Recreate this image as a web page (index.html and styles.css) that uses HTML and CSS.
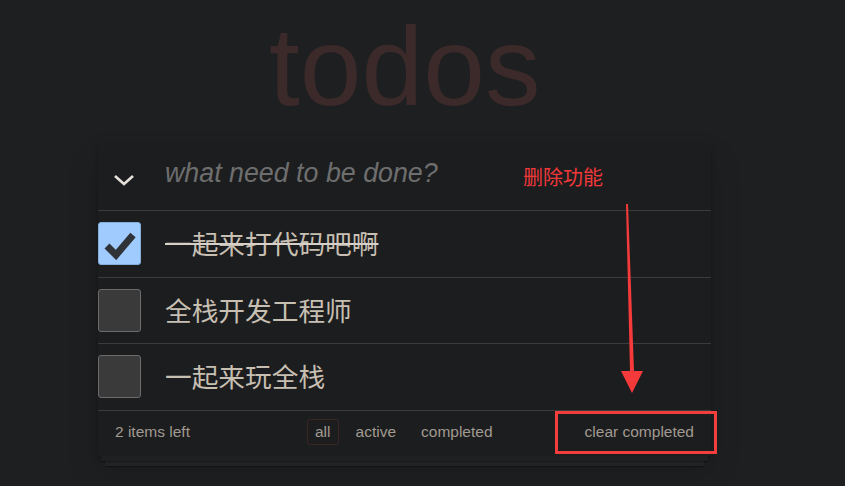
FILE: index.html
```html
<!DOCTYPE html>
<html lang="zh">
<head>
<meta charset="utf-8">
<title>todos</title>
<link rel="stylesheet" href="styles.css">
</head>
<body>
<div class="page">
  <h1 class="title">todos</h1>
  <section class="app">
    <header class="new-row">
      <span class="toggle-all">
        <svg width="22" height="12" viewBox="0 0 22 12"><polyline points="2,2 11,10 20,2" fill="none" stroke="#e6e1da" stroke-width="2.6"/></svg>
      </span>
      <span class="placeholder">what need to be done?</span>
    </header>
    <ul class="list">
      <li class="item done">
        <span class="box checked">
          <svg width="34" height="30" viewBox="0 0 34 30"><polyline points="4,16 13,25 30,5" fill="none" stroke="#2f3236" stroke-width="7"/></svg>
        </span>
        <span class="label">一起来打代码吧啊</span>
      </li>
      <li class="item">
        <span class="box"></span>
        <span class="label">全栈开发工程师</span>
      </li>
      <li class="item">
        <span class="box"></span>
        <span class="label">一起来玩全栈</span>
      </li>
    </ul>
    <footer class="footer">
      <span class="count">2 items left</span>
      <nav class="filters">
        <span class="filter selected">all</span>
        <span class="filter">active</span>
        <span class="filter">completed</span>
      </nav>
      <span class="clear">clear completed</span>
    </footer>
    <div class="sheet sheet1"></div>
    <div class="sheet sheet2"></div>
  </section>
  <div class="note">删除功能</div>
  <svg class="arrow" width="30" height="200" viewBox="0 0 30 200">
    <polygon points="5,0 7,0 13,167 22,167 11,189 0,167 9,167" fill="#f43a3a"/>
  </svg>
  <div class="highlight"></div>
</div>
</body>
</html>
```

FILE: styles.css
```css
html, body {
  margin: 0;
  padding: 0;
  background: #1e1f21;
}

.page {
  position: relative;
  width: 845px;
  height: 486px;
  overflow: hidden;
  font-family: "Liberation Sans", Arial, "Noto Sans CJK SC", sans-serif;
}

.title {
  margin: 0;
  padding-top: 4px;
  padding-left: 269px;
  font-size: 111px;
  font-weight: normal;
  line-height: 126px;
  color: #3b2a29;
  height: 141px;
}

.app {
  position: relative;
  margin-left: 98px;
  width: 613px;
  background: #1c1d1f;
  box-shadow: 0 2px 4px rgba(0,0,0,0.25), 0 15px 30px rgba(0,0,0,0.15);
}

.new-row {
  display: flex;
  align-items: center;
  height: 65px;
  border-bottom: 1px solid #3a3b3d;
}

.toggle-all {
  width: 51px;
  display: flex;
  justify-content: center;
  margin-top: 4px;
}

.placeholder {
  margin-left: 16px;
  font-size: 26.8px;
  font-style: italic;
  color: #6e6e6e;
  margin-top: -8px;
}

.list {
  list-style: none;
  margin: 0;
  padding: 0;
}

.item {
  display: flex;
  align-items: center;
  height: 65.6px;
  border-bottom: 1px solid #3a3b3d;
}

.box {
  box-sizing: border-box;
  width: 43px;
  height: 43px;
  border: 1px solid #6b6b6b;
  border-radius: 3px;
  background: #3a3a3a;
  display: flex;
  align-items: center;
  justify-content: center;
}

.box.checked {
  background: #9fcbff;
  border-color: #86aedc;
}

.box.checked svg {
  margin-top: 2px;
}

.label {
  margin-left: 24px;
  font-family: "Noto Sans CJK SC", "Liberation Sans", sans-serif;
  font-size: 26.7px;
  color: #c7bfb2;
  margin-top: -2px;
}

.done .label {
  text-decoration: line-through;
  text-decoration-color: #d6d0c8;
  text-decoration-thickness: 2px;
}

.footer {
  position: relative;
  z-index: 2;
  display: flex;
  align-items: center;
  height: 42px;
  padding: 0 17px 3px;
  font-size: 15.5px;
  color: #a19a90;
  background: #1c1d1f;
}

.count {
  width: 189px;
}

.filters {
  display: flex;
  gap: 3px;
}

.filter {
  padding: 3px 7px;
  border: 1px solid transparent;
  border-radius: 3px;
  margin: 0 3px;
}

.filter.selected {
  border-color: #3a2424;
}

.clear {
  margin-left: auto;
}

.sheet {
  position: absolute;
  background: #1f2022;
  height: 9px;
}

.sheet1 {
  left: 3px;
  right: 3px;
  bottom: -5px;
  z-index: 1;
  box-shadow: 0 1px 1px rgba(0,0,0,0.3);
}

.sheet2 {
  left: 7px;
  right: 7px;
  bottom: -10px;
  z-index: 0;
  background: #222325;
  box-shadow: 0 1px 1px rgba(0,0,0,0.3);
}

.note {
  position: absolute;
  z-index: 10;
  left: 523px;
  top: 164px;
  font-family: "Noto Sans CJK SC", sans-serif;
  font-size: 20px;
  line-height: 26px;
  color: #f0393a;
}

.arrow {
  position: absolute;
  z-index: 10;
  left: 621px;
  top: 204px;
}

.highlight {
  position: absolute;
  z-index: 10;
  left: 555px;
  top: 411px;
  width: 156px;
  height: 37px;
  border: 3px solid #f43d3d;
}
```
